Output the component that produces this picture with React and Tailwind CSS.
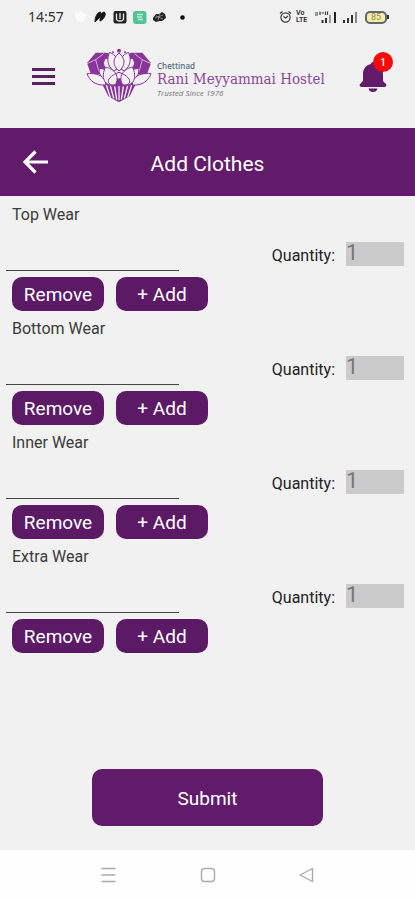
import React from "react";

const SECTIONS = ["Top Wear", "Bottom Wear", "Inner Wear", "Extra Wear"];

function StatusBar() {
  return (
    <div className="flex h-[34px] items-center justify-between pl-7 pr-[26px] text-[#333]">
      <div className="flex items-center">
        <span className="w-[46px] font-['Noto_Sans',sans-serif] text-[14px] leading-4">14:57</span>
        <svg width="112" height="16" viewBox="0 0 112 16" aria-hidden="true">
          <path d="M1 3l4 2 2-3 3 3 3 1-2 5-4 3-5-3z" fill="#fbfbfb" />
          <path d="M21 13c0-5 2-9 5-10 2 0 1 4-1 6zM26 12c0-5 1-8 4-9 3 1 0 8-4 9z" fill="#161616" stroke="#161616" />
          <rect x="39.500" y="2" width="13" height="12.500" rx="2" fill="#222" />
          <path d="M42.500 4.500v5q0 2.500 3.500 2.500t3.500-2.500v-5M46 4v6" fill="none" stroke="#eee" strokeWidth="1.300" />
          <rect x="59" y="2" width="13.500" height="13" rx="3" fill="#4fc596" />
          <path d="M63 5.500h6M63 8h5M64 10.500h5" stroke="#c8f0df" strokeWidth="1.400" />
          <path d="M79 9l3-4 3 0 3-2 3 2 1 4-4 3-3 0-3 1-3-2z" fill="#222" />
          <path d="M81 9l8-3M84 11l2-7M82 7l7 3" stroke="#aaa" strokeWidth=".7" />
          <circle cx="108.500" cy="8.500" r="2.300" fill="#111" />
        </svg>
      </div>
      <div className="flex items-center">
        <svg width="13" height="14" viewBox="0 0 13 14" fill="none" stroke="#3a3a3a" strokeWidth="1.200" aria-hidden="true">
          <circle cx="6.500" cy="7.500" r="4.600" />
          <path d="M1 3.500L3.500 1.500M12 3.500L9.500 1.500M4.500 6.500l2 1.500 2.500-2" />
        </svg>
        <span className="ml-1 flex w-[18px] flex-col font-['Roboto',sans-serif] text-[7px] font-bold leading-[7px]">
          <span>Vo</span>
          <span>LTE</span>
        </span>
        <svg width="47" height="14" viewBox="0 0 47 14" aria-hidden="true">
          <path d="M1 3h3M6 1.500v3.500M7.500 3h2.500M11.500 1.500v3.500M13.500 1.500v3.500M1 5h3" stroke="#444" strokeWidth="1.200" />
          <path d="M8.500 10v3M12 8v5" stroke="#333" strokeWidth="2" />
          <path d="M16 5v8" stroke="#999" strokeWidth="2" />
          <path d="M21 2v11" stroke="#222" strokeWidth="2" />
          <path d="M30 10v3M34 8v5M38 5v8" stroke="#333" strokeWidth="2" />
          <path d="M42 2v11" stroke="#888" strokeWidth="2" />
        </svg>
        <span className="ml-1 flex h-[13px] w-[22px] items-center justify-center rounded-[5px] border-2 border-[#666] bg-[#f3eeb0] font-['Roboto',sans-serif] text-[9px] leading-none text-[#a08a42]">
          85
        </span>
        <span className="h-1 w-[2px] bg-[#333]" />
      </div>
    </div>
  );
}

function LotusLogo() {
  return (
    <svg width="66" height="55" viewBox="17 11 198 165" aria-hidden="true">
      <path d="M46 25h34l20 10v55H32L20 56z" fill="#8a349b" />
      <path d="M186 25h-34l-20 10v55h68l12-34z" fill="#8a349b" />
      <path d="M20 58l26-12 10 36M46 46l24-18M212 58l-26-12-10 36M186 46l-24-18" fill="none" stroke="#f1f1f1" strokeWidth="2" />
      <path d="M64 116l20 40 32 18 32-18 20-40-52-14z" fill="#8a349b" />
      <path d="M78 122l12 38M90 124l10 38M103 126l6 40M116 126v42M129 126l-6 40M142 124l-10 38M154 122l-12 38" stroke="#f1f1f1" strokeWidth="4" />
      <g fill="#f3f1f4" stroke="#8a349b" strokeWidth="3" strokeLinejoin="round">
        <path d="M80 76C66 62 68 52 76 42c16 2 26 12 32 34z" />
        <path d="M152 76c14-14 12-24 4-34-16 2-26 12-32 34z" />
        <path d="M100 80C78 62 80 40 88 24c18 8 28 22 28 46z" />
        <path d="M132 80c22-18 20-40 12-56-18 8-28 22-28 46z" />
        <path d="M116 80c-20-16-20-38 0-54 20 16 20 38 0 54z" />
        <path d="M76 122C46 124 28 110 20 88c20-2 40 2 54 16z" />
        <path d="M156 122c30 2 48-12 56-34-20-2-40 2-54 16z" />
        <path d="M70 104C58 92 54 82 58 72c16 2 26 8 32 18z" />
        <path d="M162 104c12-12 16-22 12-32-16 2-26 8-32 18z" />
        <path d="M104 122C72 128 60 98 76 68c28 6 44 30 28 54z" />
        <path d="M128 122c32 6 44-24 28-54-28 6-44 30-28 54z" />
        <path d="M106 122C76 126 74 98 116 84c42 14 40 42 10 38-6 0-8-4-10-10-2 6-4 10-10 10z" fill="none" />
      </g>
      <circle cx="116" cy="19" r="6" fill="#8a349b" />
      <circle cx="98" cy="24" r="3" fill="#8a349b" />
      <circle cx="134" cy="24" r="3" fill="#8a349b" />
    </svg>
  );
}

function Header() {
  return (
    <header className="flex h-[94px] items-start pl-8 pr-7">
      <button type="button" aria-label="Menu" className="mt-[34px] flex w-[23px] flex-col gap-1">
        <span className="h-[3px] w-full bg-[#58215f]" />
        <span className="h-[3px] w-full bg-[#58215f]" />
        <span className="h-[3px] w-full bg-[#58215f]" />
      </button>
      <div className="ml-[31px] mt-[14px] flex">
        <LotusLogo />
        <div className="ml-[5px] mt-3 whitespace-nowrap">
          <p className="font-['Open_Sans',sans-serif] text-[8px] font-semibold leading-[11px] text-[#557083]">Chettinad</p>
          <p className="font-['DejaVu_Serif_Condensed','DejaVu_Serif',serif] text-[15px] leading-4 text-[#8d479c]">
            Rani Meyyammai Hostel
          </p>
          <p className="font-['Open_Sans',sans-serif] text-[8px] italic leading-3 text-[#777]">Trusted Since 1976</p>
        </div>
      </div>
      <button type="button" aria-label="Notifications" className="relative ml-auto mt-[26px] h-8 w-7">
        <svg width="28" height="32" viewBox="0 0 28 32" fill="#621b6a" aria-hidden="true">
          <path d="M14 2c-1 0-2 .8-2 2C7 5 4 9 4 14v7l-3 3c-1 2 0 3 2 3h22c2 0 3-1 2-3l-3-3v-7c0-5-3-9-8-10 0-1.200-1-2-2-2zM9.500 28.500h9q-1 3.500-4.500 3.500t-4.500-3.500z" />
        </svg>
        <span className="absolute -right-1.5 -top-2 flex size-5 items-center justify-center rounded-full bg-[#fb0808] font-['Roboto',sans-serif] text-[10px] font-medium text-white">
          1
        </span>
      </button>
    </header>
  );
}

function WearSection({ name }) {
  const id = name.toLowerCase().replace(" ", "-");
  const action = "h-[34px] w-[92px] rounded-[10px] bg-[#5c1a66] pt-0.5 text-[19px] leading-6 text-white";
  return (
    <section className="pb-[3px]">
      <label htmlFor={id} className="block pl-3 text-base leading-[30px] text-[#3b3b3b]">
        {name}
      </label>
      <div className="flex h-[41px] items-start justify-between pl-1.5 pr-[11px]">
        <input id={id} type="text" className="h-full w-[173px] border-b border-[#444] bg-transparent px-1 outline-none" />
        <div className="mt-3 flex items-start gap-[11px]">
          <label htmlFor={id + "-quantity"} className="text-base leading-7 text-[#222]">
            Quantity:
          </label>
          <input
            id={id + "-quantity"}
            type="text"
            inputMode="numeric"
            defaultValue="1"
            className="h-6 w-[58px] bg-[#cbcbcb] pb-1 text-[22px] leading-5 text-[#777] outline-none"
          />
        </div>
      </div>
      <div className="mt-1.5 flex gap-3 pl-3">
        <button type="button" className={action}>Remove</button>
        <button type="button" className={action}>+ Add</button>
      </div>
    </section>
  );
}

export default function App() {
  return (
    <div className="flex min-h-screen flex-col bg-[#f1f1f1] font-['Roboto',sans-serif]">
      <StatusBar />
      <Header />
      <div className="grid h-[68px] grid-cols-[60px_1fr_60px] items-center bg-[#621b6a] text-white">
        <button type="button" aria-label="Back" className="pl-[22px]">
          <svg width="27" height="24" viewBox="0 0 27 24" fill="none" stroke="white" strokeWidth="3.200" aria-hidden="true">
            <path d="M13.500 1.500L3 12l10.500 10.500M3 12h23" />
          </svg>
        </button>
        <h1 className="pt-1 text-center text-[21px] leading-7">Add Clothes</h1>
      </div>
      <main className="flex flex-1 flex-col pt-1">
        {SECTIONS.map((name) => (
          <WearSection key={name} name={name} />
        ))}
        <button
          type="button"
          className="mx-auto mb-6 mt-auto h-[57px] w-[231px] rounded-[10px] bg-[#621b6a] pt-0.5 text-[19px] leading-6 text-white"
        >
          Submit
        </button>
      </main>
      <nav className="flex h-[50px] items-center justify-between bg-[#fefefe] px-[100px] text-[#aaa]">
        <button type="button" aria-label="Recent apps">
          <svg width="16" height="16" viewBox="0 0 16 16" fill="none" stroke="currentColor" strokeWidth="1.500" aria-hidden="true">
            <path d="M1.500 1.500h14M1.500 8h14M1.500 14.500h14" />
          </svg>
        </button>
        <button type="button" aria-label="Home">
          <svg width="16" height="16" viewBox="0 0 16 16" fill="none" stroke="currentColor" strokeWidth="1.400" aria-hidden="true">
            <rect x="1.500" y="1.500" width="13" height="13" rx="3" />
          </svg>
        </button>
        <button type="button" aria-label="Back to previous screen">
          <svg width="16" height="16" viewBox="0 0 16 16" fill="none" stroke="currentColor" strokeWidth="1.400" strokeLinejoin="round" aria-hidden="true">
            <path d="M13.500 1.500v13L1 8z" />
          </svg>
        </button>
      </nav>
    </div>
  );
}
